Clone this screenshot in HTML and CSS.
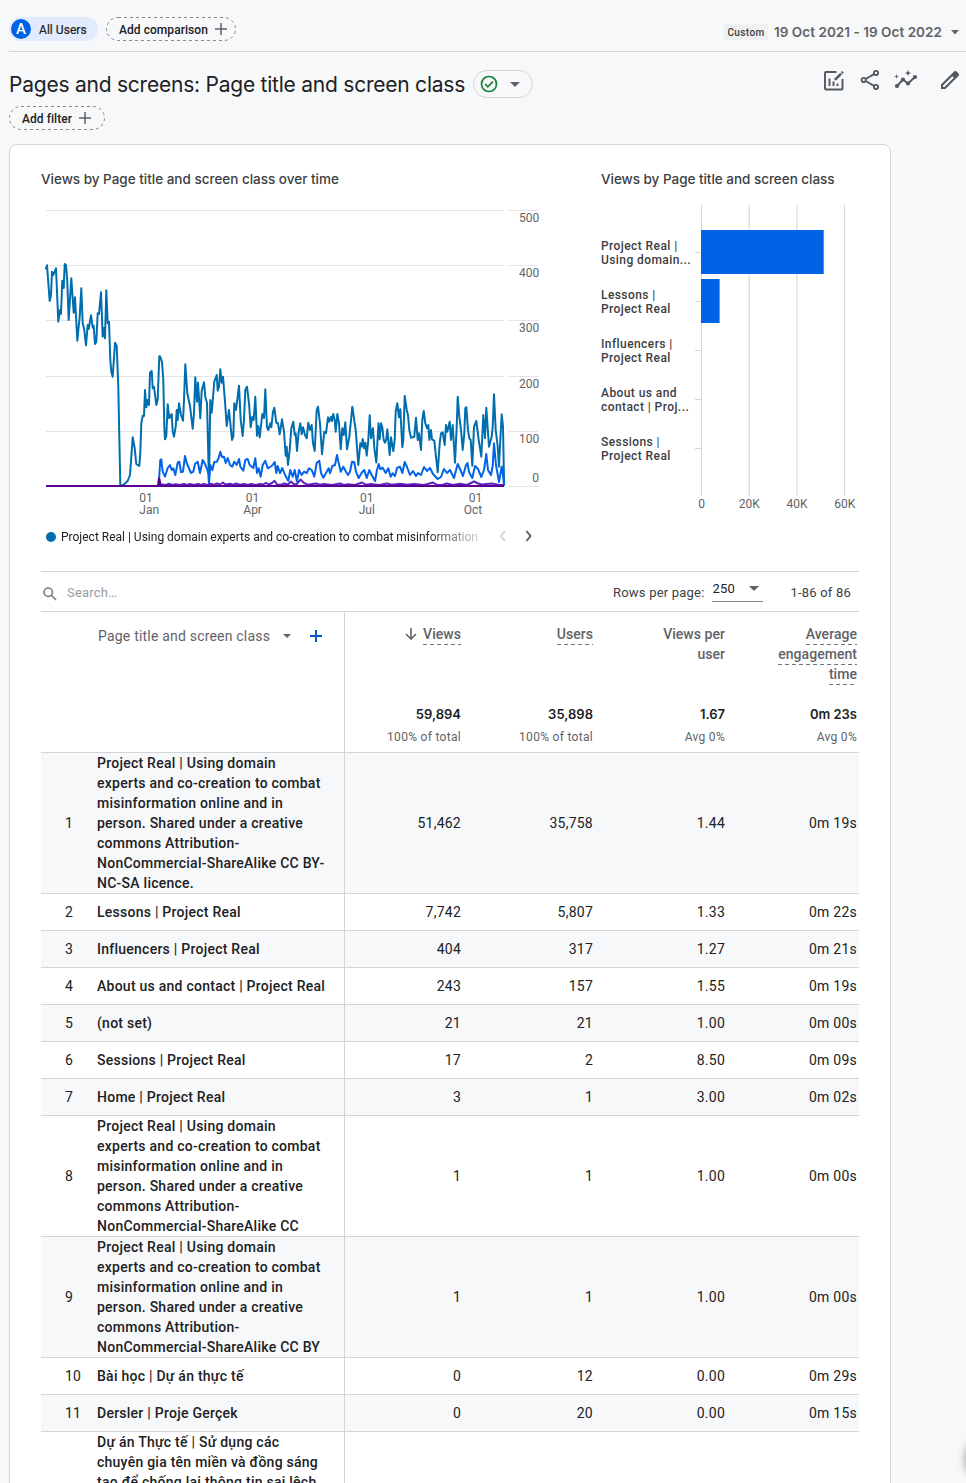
FILE: index.html
```html
<!DOCTYPE html>
<html lang="en">
<head>
<meta charset="utf-8">
<title>Pages and screens</title>
<link rel="stylesheet" href="styles.css">
</head>
<body>
<header class="topbar">
  <div class="chip chip-user"><span class="avatar">A</span><span class="chip-label">All Users</span></div>
  <div class="chip chip-dashed comparison"><svg class="outline" width="130" height="24"><rect x=".5" y=".5" width="129" height="23" rx="11.5"/></svg><span class="chip-label">Add comparison</span><svg class="plus" width="12" height="12" viewBox="0 0 12 12"><path d="M6 0V12M0 6H12"/></svg></div>
  <div class="dates"><span class="badge">Custom</span><span class="range">19 Oct 2021 - 19 Oct 2022</span><svg class="caret" width="8" height="5" viewBox="0 0 8 5"><path d="M0 0H8L4 4.5Z"/></svg></div>
</header>
<section class="heading">
  <h1>Pages and screens: Page title and screen class</h1>
  <div class="status"><svg width="18" height="18" viewBox="0 0 18 18" class="check"><circle cx="9" cy="9" r="7.5"/><path d="M5.2 9.2L7.8 11.8L12.9 6.6"/></svg><svg class="caret" width="10" height="5" viewBox="0 0 10 5"><path d="M0 0H10L5 5Z"/></svg></div>
  <div class="tools">
    <svg class="t-report" width="22" height="22" viewBox="0 0 22 22"><path class="s" d="M13.5 2H3Q2 2 2 3V18.5Q2 19.5 3 19.5H18.5Q19.500 19.5 19.500 18.5V9"/><path class="s" d="M6.500 8.500V16M10.500 11.500V16M14.500 13.500V16"/><path d="M11.500 8.500L17.200 2.800L19 4.600L13.300 10.300H11.500ZM17.900 2.100L19 1L20.800 2.800L19.700 3.900Z"/></svg>
    <svg class="t-share" width="20" height="20" viewBox="0 0 20 20"><g class="s"><circle cx="3.700" cy="10" r="2.100"/><circle cx="16" cy="3" r="2.100"/><circle cx="16" cy="17" r="2.100"/><path d="M5.600 9L14.100 4.100M5.600 11L14.100 15.900"/></g></svg>
    <svg class="t-insights" width="24" height="20" viewBox="0 0 24 20"><path class="s" d="M3 16L9 9.500L14 13.500L21 7"/><circle cx="3" cy="16" r="2.100"/><circle cx="9" cy="9.500" r="2.100"/><circle cx="14" cy="13.500" r="2.100"/><circle cx="21" cy="7" r="2.100"/><path d="M14 0L14.900 2.200L17 3L14.900 3.900L14 6L13.100 3.900L11 3L13.100 2.200ZM2.500 4L3.100 5.900L5 6.500L3.100 7.100L2.500 9L1.900 7.100L0 6.500L1.900 5.900Z"/></svg>
    <svg class="t-edit" width="20" height="20" viewBox="0 0 20 20"><path fill-rule="evenodd" d="M1 19V14.600L14.300 1.300Q15.300.5 16.300 1.300L18.700 3.700Q19.500 4.700 18.700 5.700L5.400 19ZM3 17H4.500L13.800 7.700L12.300 6.200L3 15.500Z"/></svg>
  </div>
</section>
<div class="filters"><div class="chip chip-dashed filter"><svg class="outline" width="96" height="24"><rect x=".5" y=".5" width="95" height="23" rx="11.5"/></svg><span class="chip-label">Add filter</span><svg class="plus" width="12" height="12" viewBox="0 0 12 12"><path d="M6 0V12M0 6H12"/></svg></div></div>

<main class="card">
  <div class="charts">
    <section class="trend">
      <h2>Views by Page title and screen class over time</h2>
      <svg class="plot" width="510" height="320" viewBox="41 200 510 320">
        <path class="grid" d="M46 210.500H504M46 265.500H504M46 320.500H504M46 376.500H504M46 431.500H504M508 210.500H538M508 265.500H538M508 320.500H538M508 376.500H538M508 431.500H538M508 486.500H538M139.500 487V491M252.500 487V491M366.500 487V491M481.500 487V491"/>
        <polyline class="series main" points="45.7,269.300 47,265.300 49.700,301 51,295 52,271.700 53.300,275 56,268.300 58.300,321.700 60,310 61,314 62.300,280.700 63.700,288 64.700,264 66,265.300 67.300,281.700 68.700,320 71.300,278.300 73.700,312.700 75,297.300 77.300,340.700 79.700,316.700 81.300,288.300 82.700,323.300 84.300,330 86,345.300 87.700,325 88.700,329 91,315.300 92.700,327.700 93.700,325.700 95,344 96.300,341.700 97.700,313.300 99,314 101,292.300 102.700,336.700 104,328 105,338.300 106.300,290.300 107.700,323.300 109,321.700 110.300,360 111.300,371.700 112.700,376.700 115,342.700 116.700,346 118.300,386.700 120.300,485.300 123.300,485 127.700,481 130,475 132.700,437.300 134.700,448.300 136.300,464 139.300,466 140.300,453 141.300,423.300 142.700,415.700 144,416 145,390 146.300,407.300 147.700,400 149,405 150,372.700 151.700,371 152.700,388.300 154,386.700 156.300,405 157.700,399.300 159.300,356.300 160.300,356.700 162,362.300 163.300,380 164.300,426.700 165,439.300 166.300,436 167.700,404.300 169.300,418.300 171.700,414 172.700,431.700 174,436.700 175.700,426.700 176.700,410 177.700,420 179,403.300 181,415 183,420.700 184,400 185.300,364.300 187.300,393.300 190,406 192.700,428.700 194,413 195.300,377.300 197,401.700 198,382.700 200.300,418.300 201.700,390.700 204,382.300 205.300,396.700 207,403 209,483.300 210.300,400 211.700,412.700 214.300,381.700 216.700,375 217.700,390.700 219,386.700 220.300,369.300 221.700,382.700 223,376.700 225,401.700 226.700,426 229,410 232,440 233.300,436.700 234.300,403.300 236,410 239,385.700 240.700,420 242.700,436 244,420 245.300,390 247,386.700 249,403.300 250.700,427.300 252.300,416.700 253.700,420 255.300,396.700 257,435.700 258.300,426 259.700,437.300 262.300,414 264,418 265.300,389.300 267,427.300 268.300,430 270.300,423.300 271.300,427.300 273,411.700 274.300,407.700 276.300,422.700 278,423.300 279.700,434.300 282,419.300 284,431.700 285.700,455.700 286.700,446.700 288,465 289.700,450 291.300,428.300 293.300,421.700 294.700,435 295.700,433.300 297,451 298.700,431.700 300.300,423.300 301.700,434.300 303,427.300 305,435 306.700,438.300 308.300,422.700 310,430 311.700,425 313,443.300 314.700,451 316.700,410 318,406.700 320,423.300 322,454.300 324.300,431.700 326,433.300 328,417.300 329.300,421.700 331,416.700 332,421 333.300,414 334.700,420 335.700,431.700 337.300,414 339,423.300 340.700,449.300 342.300,428.300 343.700,435 345.300,422.300 347,449.300 349.300,436.700 351,420 352.300,406.700 354,418.300 355.700,430 358.300,465 360.300,443.300 361.700,446.700 362.700,439 364,448.300 365.300,442.700 366.700,455.700 368.300,440 369.700,415.300 371,438.300 373,428.300 374.300,448 376.300,462.500 378.500,423.300 379.700,439.300 381,423.300 382.300,427.300 383.700,440 385,442.700 386.300,439.300 387.300,429.300 389.700,455 391,437.300 393.300,451 394.700,440 395.700,411.700 397.300,403.300 399,417.300 400.300,409.300 402.300,447.300 403.300,440 404.700,396 406.700,410 408,415 409.300,430 411,437.700 414.300,436.700 416,417.700 417.700,440 419,433.300 421,450 422.300,420 423.700,411 425.300,423.300 427,428.300 428.300,425 429.300,440 431,430 432,439.300 434.300,440.700 436,456.700 437.700,472.300 439.700,443.300 441,433.300 442.700,432.300 444.700,445 446,425 447.300,431.700 449.700,421.700 451,440 452.700,425 455,462.700 456.700,426.700 457.700,396.700 459.300,416.700 461,430 462.700,450 464.300,433.300 465.300,408.300 466.300,407.300 468,430 469.300,438.300 470.700,440 472.300,465.700 474,426.700 476.300,421 478.700,440 481.300,456.700 483.300,415 485,438.300 486.300,407.700 489,446.700 491.700,436.700 492.700,426.700 494,394.300 495.700,430 497.700,446.700 499,466.700 500.300,440 501.700,414.300 503,426.700 504.100,485.700"/>
        <polyline class="series second" points="158.7,485 160.300,460 161.300,459.300 162.700,471.700 165,476.700 167.700,468 170,465 171.700,470 173.300,468.300 175.300,475 177.700,462.700 179.300,461.700 181,472 183,471.700 185,456 186.700,463 189,468.300 191,473 193.300,471.700 195,464 197.700,461.700 200,473 202.700,460 205,464 206.700,468.300 208.300,473 209,483 210.300,465 212.300,470 214.300,462 216.700,461.700 218.700,458 220.300,451.700 222,457 224,456.700 225.700,463 227.700,458 230,465 232.300,466.700 234.300,461.700 236.700,465 239,459 240.300,466.700 243.300,470.700 245.300,460 247.700,459 249.700,465 253.300,468 255.300,458.300 257,473 258.700,468.300 260.700,476.700 262.700,465 265.300,460.700 267.700,468.300 271.700,466 274.700,462 276.300,473 277.700,466 280,473.300 282.300,468 285,475 288.300,480.700 290.300,470 292.700,476.700 294.700,470 297,481.700 299,470 301.700,475 304,471.700 306.700,473 309,468.300 311.700,470 314.300,476.700 316.700,463 319.300,460.700 321,473 323.300,477.700 326.700,471.700 328.700,468.300 330,473.300 332.300,466 335,465 337,455 338.700,463 340.700,471.700 343.300,466.700 346,471.700 348,475 350,471.700 352,461.700 354.300,462.300 356,471.700 358.700,478 361.700,472.700 364.300,470 366.700,478 369.300,470 371.700,475 375,481 377,470 378.700,464 380.300,469.300 382.700,467.700 385.700,473 388.300,468.300 390.700,476.700 392.700,473.300 395,476 397,468 400,466.700 402.300,473 404.700,462 407,467 410,475 413,471 416,476 418,473 421,475 424,467 427,471 430,468 433,474 437.700,479 441,477 444,469 447,473 450,470 454,478 457.700,464 460,469 463,476 466,465 467.500,463 469,472 472.300,478 475,466 478,469 481.300,477 484,470 486.300,454 488,470 491,475 492.700,466 494,443.300 496,465 499,482 501.700,466.500 503,475 504,485.700"/>
        <polyline class="series third" points="159,485 163,484.500 166,485 169,483.800 172,485 176,484.200 179,485 184,484 187,485 190,484 194,485 198,484 201,485 204,484 207,485 211,483.800 214,485 217,483.500 220,484.500 223,482.500 225,484.500 230,483.800 233,484.800 236,483.500 240,484.800 244,484 248,485 251,484 256,485 260,484 263,484.500 266,482.800 269,484.500 272,483 274.500,480.800 277,484.500 281,484.800 284,483.500 288,484.500 291,481.500 294,484.500 297,484 300.500,479.500 304,483 308,484.800 316,483.500 320,484.800 324,484 332,485 340,483.500 344,485 348,484.200 355,485 362,482.500 366,484.800 371,484 379,485 387,483.500 392,484.800 400,483.800 407,484.800 414,484 424,485 433,482.500 437,484.800 442,485 447,483.500 453,485 460,483.800 467,485 474,481.500 478,483.500 482,484.500 492,483.500 498,484.800 504,485"/>
        <path class="series base" d="M46 486H504"/><path class="spike" d="M157 486L158 477.500H160L162 486Z"/>
        <g class="axis"><text x="519" y="222">500</text><text x="519" y="277">400</text><text x="519" y="332">300</text><text x="519" y="388">200</text><text x="519" y="443">100</text><text x="532.300" y="482">0</text><text x="139.300" y="502">01</text><text x="139.300" y="514">Jan</text><text x="245.700" y="502">01</text><text x="243.300" y="514">Apr</text><text x="360" y="502">01</text><text x="358.700" y="514">Jul</text><text x="468.700" y="502">01</text><text x="463.700" y="514">Oct</text></g>
      </svg>
      <div class="legend"><i class="dot"></i><span class="legend-text">Project Real | Using domain experts and co-creation to combat misinformation</span>
        <svg class="pager" width="36" height="12" viewBox="0 0 36 12"><path class="prev" d="M6 1L2 6L6 11"/><path class="next" d="M27.500 1L31.500 6L27.500 11"/></svg></div>
    </section>
    <section class="bars">
      <h2>Views by Page title and screen class</h2>
      <svg class="barplot" width="270" height="320" viewBox="601 200 270 320">
        <path class="bargrid" d="M701.500 205V496M749.200 205V496M796.900 205V496M844.500 205V496M695 252.500H701M695 301.500H701M695 350.500H701M695 399.500H701M695 448.500H701"/>
        <path class="bar" d="M701 230H823.700V274H701ZM701 279H719.600V323H701Z"/>
        <g class="cats"><text x="601" y="250">Project Real |</text><text x="601" y="264">Using domain...</text><text x="601" y="299">Lessons |</text><text x="601" y="313">Project Real</text><text x="601" y="348">Influencers |</text><text x="601" y="362">Project Real</text><text x="601" y="397">About us and</text><text x="601" y="411">contact | Proj...</text><text x="601" y="446">Sessions |</text><text x="601" y="460">Project Real</text></g>
        <g class="axis mid"><text x="701.500" y="508">0</text><text x="749.300" y="508">20K</text><text x="797" y="508">40K</text><text x="844.700" y="508">60K</text></g>
      </svg>
    </section>
  </div>

  <div class="toolbar">
    <svg class="search" width="14" height="14" viewBox="0 0 14 14"><circle cx="5.200" cy="5.200" r="4.200"/><path d="M8.300 8.300L13 13"/></svg>
    <span class="placeholder">Search…</span>
    <span class="rows-label">Rows per page:</span>
    <span class="select">250<svg class="caret" width="10" height="5" viewBox="0 0 10 5"><path d="M0 0H10L5 5Z"/></svg></span>
    <span class="count">1-86 of 86</span>
  </div>

  <div class="row head">
    <div class="dimension"><span>Page title and screen class</span><svg class="caret" width="8" height="4" viewBox="0 0 8 4"><path d="M0 0H8L4 4Z"/></svg><svg class="add" width="12" height="12" viewBox="0 0 12 12"><path d="M6 0V12M0 6H12"/></svg></div>
    <div class="metric"><div class="label"><svg class="down" width="12" height="12" viewBox="0 0 12 12"><path d="M6 0V11M1 6L6 11L11 6"/></svg><u>Views</u></div><b>59,894</b><small>100% of total</small></div>
    <div class="metric"><div class="label"><u>Users</u></div><b>35,898</b><small>100% of total</small></div>
    <div class="metric"><div class="label">Views per<br>user</div><b>1.67</b><small>Avg 0%</small></div>
    <div class="metric"><div class="label"><u>Average</u><br><u>engagement</u><br><u>time</u></div><b>0m 23s</b><small>Avg 0%</small></div>
  </div>
  <div class="row shade"><span class="num">1</span><span class="name">Project Real | Using domain<br>experts and co-creation to combat<br>misinformation online and in<br>person. Shared under a creative<br>commons Attribution-<br>NonCommercial-ShareAlike CC BY-<br>NC-SA licence.</span><span>51,462</span><span>35,758</span><span>1.44</span><span>0m 19s</span></div>
  <div class="row"><span class="num">2</span><span class="name">Lessons | Project Real</span><span>7,742</span><span>5,807</span><span>1.33</span><span>0m 22s</span></div>
  <div class="row shade"><span class="num">3</span><span class="name">Influencers | Project Real</span><span>404</span><span>317</span><span>1.27</span><span>0m 21s</span></div>
  <div class="row"><span class="num">4</span><span class="name">About us and contact | Project Real</span><span>243</span><span>157</span><span>1.55</span><span>0m 19s</span></div>
  <div class="row shade"><span class="num">5</span><span class="name">(not set)</span><span>21</span><span>21</span><span>1.00</span><span>0m 00s</span></div>
  <div class="row"><span class="num">6</span><span class="name">Sessions | Project Real</span><span>17</span><span>2</span><span>8.50</span><span>0m 09s</span></div>
  <div class="row shade"><span class="num">7</span><span class="name">Home | Project Real</span><span>3</span><span>1</span><span>3.00</span><span>0m 02s</span></div>
  <div class="row"><span class="num">8</span><span class="name">Project Real | Using domain<br>experts and co-creation to combat<br>misinformation online and in<br>person. Shared under a creative<br>commons Attribution-<br>NonCommercial-ShareAlike CC</span><span>1</span><span>1</span><span>1.00</span><span>0m 00s</span></div>
  <div class="row shade"><span class="num">9</span><span class="name">Project Real | Using domain<br>experts and co-creation to combat<br>misinformation online and in<br>person. Shared under a creative<br>commons Attribution-<br>NonCommercial-ShareAlike CC BY</span><span>1</span><span>1</span><span>1.00</span><span>0m 00s</span></div>
  <div class="row"><span class="num">10</span><span class="name">Bài học | Dự án thực tế</span><span>0</span><span>12</span><span>0.00</span><span>0m 29s</span></div>
  <div class="row shade"><span class="num">11</span><span class="name">Dersler | Proje Gerçek</span><span>0</span><span>20</span><span>0.00</span><span>0m 15s</span></div>
  <div class="row last"><span class="num"></span><span class="name">Dự án Thực tế | Sử dụng các<br>chuyên gia tên miền và đồng sáng<br>tạo để chống lại thông tin sai lệch</span><span></span><span></span><span></span><span></span></div>
</main>
<div class="fab"></div>
</body>
</html>
```
FILE: styles.css
```css
* { box-sizing: border-box; }
html, body { margin: 0; height: 1483px; overflow: hidden; }
body { position: relative; background: #f7f8fa; color: #202124; font-family: Roboto, "Noto Sans", sans-serif; font-size: 14px; }
svg { display: block; flex: none; }
.topbar { height: 52px; margin-left: 9px; padding-top: 17px; border-bottom: 1px solid #d3d5d8; display: flex; align-items: flex-start; }
.chip { height: 24px; border-radius: 12px; display: flex; align-items: center; font-size: 12px; font-weight: 500; letter-spacing: .05px; }
.chip-label { padding-top: 2px; white-space: nowrap; }
.chip-user { width: 89px; background: #e2eafe; padding-left: 2px; gap: 8px; font-weight: 400; }
.chip-user .chip-label { -webkit-text-stroke: .2px #202124; }
.avatar { width: 20px; height: 20px; border-radius: 50%; background: #0063e5; color: #fff; font: 500 15px/20px Roboto, sans-serif; text-align: center; letter-spacing: 0; }
.chip-dashed { position: relative; padding-left: 13px; }
.outline { position: absolute; left: 0; top: 0; fill: none; stroke: #85888c; stroke-dasharray: 3 3; }
.comparison { width: 130px; margin-left: 8px; gap: 7px; }
.filter { width: 96px; gap: 7px; }
.plus { fill: none; stroke: #5f6368; stroke-width: 1.5; }
.caret { fill: #5f6368; }
.dates { margin: 7px 7px 0 auto; display: flex; align-items: center; color: #5f6368; }
.badge { width: 44px; height: 16px; background: #eff0f1; color: #3c4043; font: 500 10px/17px Roboto, sans-serif; letter-spacing: .4px; text-align: center; margin-right: 6px; }
.range { width: 170px; font: 600 13.500px/16px Inter, sans-serif; letter-spacing: .04px; white-space: nowrap; margin-right: 7px; }
.heading { height: 54px; padding: 18px 6px 0 9px; display: flex; align-items: flex-start; }
h1 { margin: 0; width: 464px; font: 400 21px/29px Inter, sans-serif; letter-spacing: -.23px; white-space: nowrap; }
.status { width: 60px; height: 28px; border: 1px solid #d3d5d8; border-radius: 14px; display: flex; align-items: center; padding-left: 6px; gap: 12px; }
.check { fill: none; stroke: #188038; stroke-width: 1.700; }
.tools { margin-left: auto; display: flex; align-items: flex-start; fill: #54585d; }
.tools .s { fill: none; stroke: #54585d; stroke-width: 1.900; }
.t-share { margin-left: 15px; }
.t-insights { margin-left: 14px; }
.t-edit { margin-left: 22px; }
.filters { height: 38px; padding-left: 9px; }
.card { width: 882px; height: 1400px; margin-left: 9px; border: 1px solid #d3d5d8; border-radius: 8px; background: #fff; padding: 25px 31px 0; }
.charts { display: flex; height: 401px; }
.trend { width: 560px; }
.bars { width: 258px; }
h2 { margin: 0; height: 30px; font: 500 13.500px/18px Inter, sans-serif; letter-spacing: -.01px; color: #3c4043; white-space: nowrap; }
.bars h2 { letter-spacing: -.03px; }
.grid { stroke: #e3e4e6; fill: none; }
.series { fill: none; stroke-width: 2; stroke-linejoin: round; }
.main { stroke: #006eae; }
.second { stroke: #0063e8; }
.third { stroke: #5b22c2; }
.base { stroke: #5b0091; }
.spike { fill: #5b0091; }
.axis { font-size: 12px; fill: #5f6368; }
.mid { text-anchor: middle; }
.legend { display: flex; align-items: center; height: 14px; margin-top: 10px; padding-left: 5px; }
.dot { width: 10px; height: 10px; border-radius: 50%; background: #006eae; margin-right: 5px; }
.legend-text { width: 417px; overflow: hidden; white-space: nowrap; font-size: 12px; line-height: 14px; -webkit-mask-image: linear-gradient(90deg, #000 87%, #0003 100%); }
.pager { margin: -2px 0 0 20.500px; fill: none; stroke-width: 2; }
.prev { stroke: #d5d6d8; }
.next { stroke: #5f6368; }
.barplot { overflow: visible; }
.bargrid { stroke: #d5d6da; }
.bar { fill: #0063e5; }
.cats { font-size: 12px; font-weight: 500; letter-spacing: .42px; fill: #3c4043; }
.toolbar { height: 41px; border-top: 1px solid #d3d5d8; border-bottom: 1px solid #d3d5d8; display: flex; align-items: center; padding: 2px 8px 0 2px; font-size: 13px; color: #3c4043; letter-spacing: .2px; }
.search { fill: none; stroke: #757a7f; stroke-width: 1.600; margin-top: 2px; }
.placeholder { color: #9a9da1; margin-left: 10px; }
.rows-label { margin-left: auto; }
.select { width: 51px; height: 22px; margin: -3px 27px 0 8px; border-bottom: 1px solid #85888c; display: flex; align-items: center; justify-content: space-between; padding: 0 4px 4px 0; color: #202124; }
.row { display: grid; grid-template-columns: 56px 247px 119px 132px 132px 132px; align-items: center; border-bottom: 1px solid #d3d5d8; min-height: 37px; line-height: 20px; letter-spacing: .25px; background: linear-gradient(#d3d5d8, #d3d5d8) 303px 0 / 1px 100% no-repeat; }
.shade { background-color: #f7f8fa; }
.row > span { text-align: right; padding-right: 2px; }
.row > .name { text-align: left; font-weight: 500; white-space: nowrap; padding: 0; }
.row > .num { text-align: left; padding: 0 0 0 24px; }
.head { grid-template-columns: 303px 119px 132px 132px 132px; height: 141px; align-items: stretch; }
.dimension { display: flex; height: 20px; align-items: center; margin: 14px 0 0 57px; color: #5f6368; letter-spacing: .2px; }
.dimension .caret { margin-left: 13px; }
.add { margin-left: 19px; stroke: #0b57d0; stroke-width: 2; }
.metric { text-align: right; padding: 12px 2px 0 0; display: flex; flex-direction: column; }
.label { height: 80px; color: #5f6368; font-weight: 500; letter-spacing: .04px; }
.label u { display: inline-block; height: 21px; margin-bottom: -1px; vertical-align: top; text-decoration: none; background: repeating-linear-gradient(90deg, #70757a 0 4px, transparent 4px 7px) 0 100% / 100% 1px no-repeat; }
.down { display: inline-block; vertical-align: -1px; margin-right: 6px; fill: none; stroke: #5f6368; stroke-width: 1.600; }
.metric b { font: 600 13px/20px Inter, sans-serif; letter-spacing: 0; }
.metric small { font-size: 12px; line-height: 20px; margin-top: 3px; color: #5f6368; letter-spacing: .3px; }
.last { border: 0; }
.fab { position: absolute; left: 966px; top: 1439px; width: 40px; height: 40px; border-radius: 50%; box-shadow: 0 0 10px 0 rgba(0, 0, 0, .45); }
```
